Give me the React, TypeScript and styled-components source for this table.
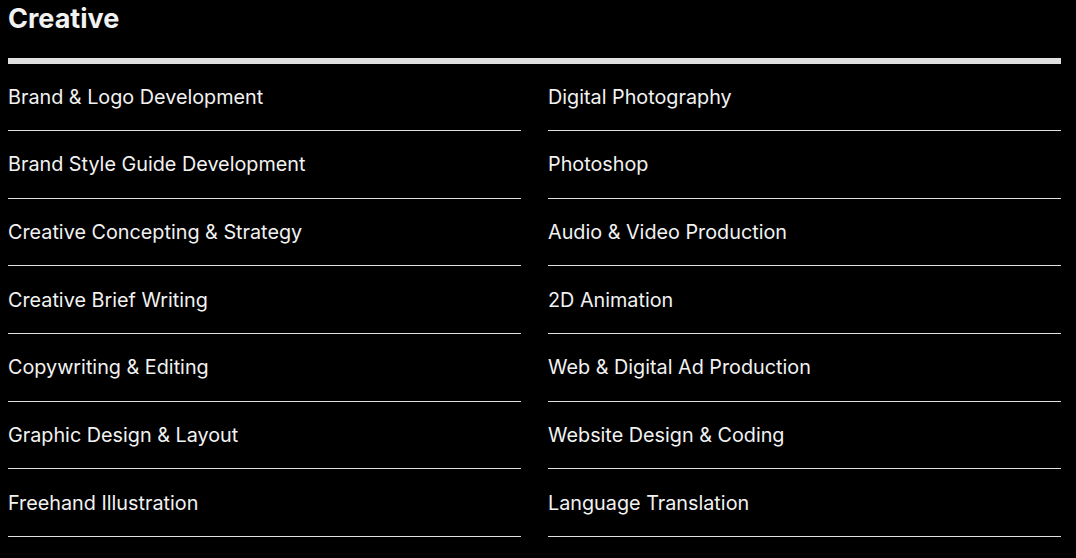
import React from "react";
import styled, { createGlobalStyle } from "styled-components";

const Global = createGlobalStyle`
  html, body { margin: 0; padding: 0; background: #000; }
  body { font-family: Inter, "Noto Sans", sans-serif; color: #f2f2f2; }
`;

const Page = styled.div`
  width: 1053px;
  padding: 0 8px;
`;

const Heading = styled.h2`
  margin: 0;
  font-size: 27px;
  line-height: 37px;
  font-weight: 700;
  color: #f2f2f2;
`;

const Bar = styled.div`
  height: 6px;
  background: #e0e0e0;
  margin-top: 21px;
`;

const Columns = styled.div`
  display: grid;
  grid-template-columns: 513px 513px;
  column-gap: 27px;
  margin-top: -0.5px;
`;

const List = styled.ul`
  list-style: none;
  margin: 0;
  padding: 0;
`;

const Item = styled.li`
  box-sizing: border-box;
  height: 67.67px;
  display: flex;
  align-items: center;
  border-bottom: 1px solid #e0e0e0;
  font-size: 19.8px;
  font-weight: 400;
  color: #f2f2f2;
`;

const left = [
  "Brand & Logo Development",
  "Brand Style Guide Development",
  "Creative Concepting & Strategy",
  "Creative Brief Writing",
  "Copywriting & Editing",
  "Graphic Design & Layout",
  "Freehand Illustration",
];

const right = [
  "Digital Photography",
  "Photoshop",
  "Audio & Video Production",
  "2D Animation",
  "Web & Digital Ad Production",
  "Website Design & Coding",
  "Language Translation",
];

export default function App() {
  return (
    <Page>
      <Global />
      <Heading>Creative</Heading>
      <Bar />
      <Columns>
        <List>
          {left.map((t) => (
            <Item key={t}>{t}</Item>
          ))}
        </List>
        <List>
          {right.map((t) => (
            <Item key={t}>{t}</Item>
          ))}
        </List>
      </Columns>
    </Page>
  );
}
